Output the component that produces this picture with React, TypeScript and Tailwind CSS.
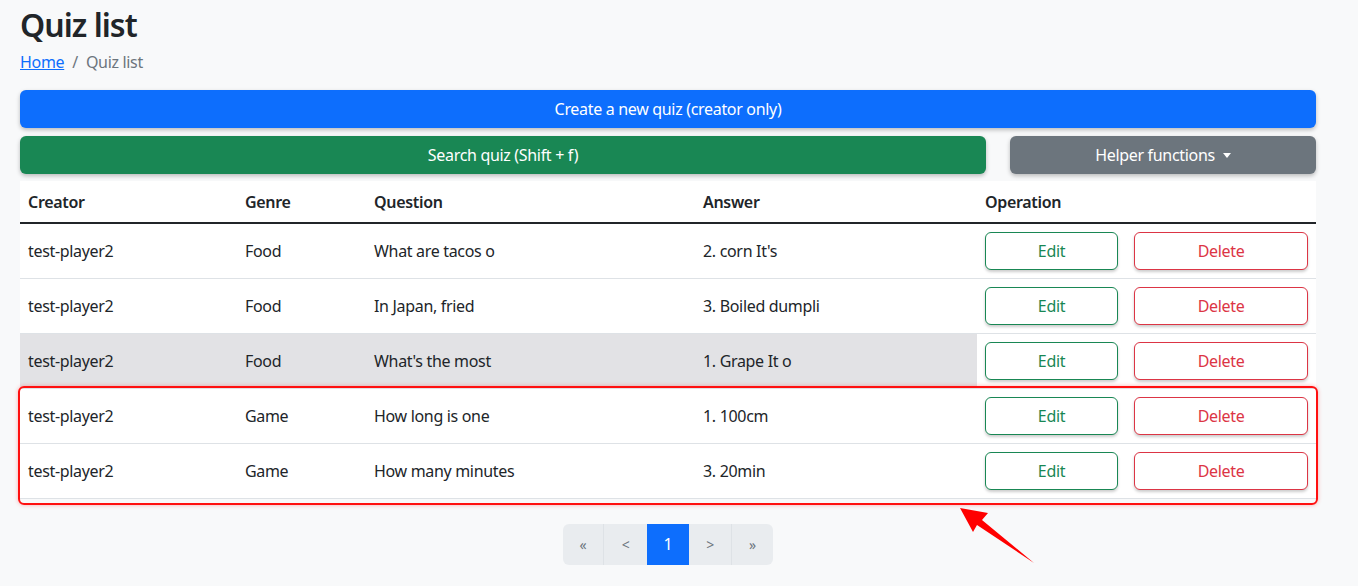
import React from "react";

const rows = [
  { c: "test-player2", g: "Food", q: "What are tacos o", a: "2. corn It's" },
  { c: "test-player2", g: "Food", q: "In Japan, fried", a: "3. Boiled dumpli" },
  { c: "test-player2", g: "Food", q: "What's the most", a: "1. Grape It o", hover: true },
  { c: "test-player2", g: "Game", q: "How long is one", a: "1. 100cm" },
  { c: "test-player2", g: "Game", q: "How many minutes", a: "3. 20min" },
];

export default function App() {
  return (
    <div
      className="min-h-[586px] bg-[#f8f9fa] text-[#212529] relative tracking-[-0.02em]"
      style={{ fontFamily: '"Noto Sans", "Open Sans", sans-serif' }}
    >
      <div className="ml-[20px] w-[1296px] pt-[6px]">
        <h2 className="text-[32px] leading-[38px] font-semibold m-0 tracking-[-0.03em]">Quiz list</h2>
        <div className="mt-[6px] flex items-center text-[16px] leading-[24px]">
          <a className="text-[#0d6efd] underline">Home</a>
          <span className="px-[8px] text-[#6c757d]">/</span>
          <span className="text-[#6c757d]">Quiz list</span>
        </div>

        <button className="mt-[16px] w-full h-[38px] rounded-[6px] bg-[#0d6efd] text-white text-[16px] shadow-[0_2px_4px_rgba(0,0,0,0.25)]">
          Create a new quiz (creator only)
        </button>

        <div className="mt-[8px] flex gap-[24px]">
          <button className="w-[966px] h-[38px] rounded-[6px] bg-[#198754] text-white text-[16px] shadow-[0_2px_4px_rgba(0,0,0,0.25)]">
            Search quiz (Shift + f)
          </button>
          <button className="flex-1 h-[38px] rounded-[6px] bg-[#6c757d] text-white text-[16px] flex items-center justify-center gap-[8px] shadow-[0_2px_4px_rgba(0,0,0,0.25)]">
            Helper functions
            <span className="w-0 h-0 border-l-[4px] border-r-[4px] border-t-[5px] border-l-transparent border-r-transparent border-t-white" />
          </button>
        </div>

        <div className="relative mt-[7px]">
          <table className="w-full border-collapse bg-white text-[16px] table-fixed">
            <colgroup>
              <col className="w-[217px]" />
              <col className="w-[129px]" />
              <col className="w-[329px]" />
              <col className="w-[282px]" />
              <col className="w-[339px]" />
            </colgroup>
            <thead>
              <tr className="border-b-2 border-[#212529]">
                <th className="text-left font-semibold px-[8px] h-[42px]">Creator</th>
                <th className="text-left font-semibold px-[8px]">Genre</th>
                <th className="text-left font-semibold px-[8px]">Question</th>
                <th className="text-left font-semibold px-[8px]">Answer</th>
                <th className="text-left font-semibold px-[8px]">Operation</th>
              </tr>
            </thead>
            <tbody>
              {rows.map((r, i) => (
                <tr key={i} className="border-b border-[#dee2e6]">
                  <td className={`px-[8px] h-[55px] ${r.hover ? "bg-[#e2e2e5]" : ""}`}>{r.c}</td>
                  <td className={`px-[8px] ${r.hover ? "bg-[#e2e2e5]" : ""}`}>{r.g}</td>
                  <td className={`px-[8px] ${r.hover ? "bg-[#e2e2e5]" : ""}`}>{r.q}</td>
                  <td className={`px-[8px] ${r.hover ? "bg-[#e2e2e5]" : ""}`}>{r.a}</td>
                  <td className="px-[8px] bg-white">
                    <div className="flex gap-[16px]">
                      <button className="w-[133px] h-[38px] rounded-[6px] border border-[#198754] text-[#198754] bg-white shadow-[0_2px_3px_rgba(0,0,0,0.2)]">
                        Edit
                      </button>
                      <button className="w-[174px] h-[38px] rounded-[6px] border border-[#dc3545] text-[#dc3545] bg-white shadow-[0_2px_3px_rgba(0,0,0,0.2)]">
                        Delete
                      </button>
                    </div>
                  </td>
                </tr>
              ))}
            </tbody>
          </table>
          <div className="absolute left-[-2px] top-[205px] w-[1300px] h-[119px] rounded-[6px] border-2 border-[#ff1010] shadow-[0_0_4px_rgba(255,0,0,0.3)] pointer-events-none" />
        </div>

        <div className="mt-[25px] flex justify-center">
          <div className="flex h-[41px] rounded-[6px] overflow-hidden bg-[#e9ecef] text-[#6c757d] text-[14px]">
            <div className="w-[41px] flex items-center justify-center border-r border-[#dee2e6]">«</div>
            <div className="w-[43px] flex items-center justify-center">&lt;</div>
            <div className="w-[42px] flex items-center justify-center bg-[#0d6efd] text-white text-[16px]">1</div>
            <div className="w-[43px] flex items-center justify-center border-r border-[#dee2e6]">&gt;</div>
            <div className="w-[41px] flex items-center justify-center">»</div>
          </div>
        </div>
      </div>

      <svg className="absolute left-0 top-0 pointer-events-none" width="1358" height="586">
        <polygon points="960,508 988,513 982,520 1034,563 977,525 973,532" fill="#ff0000" />
      </svg>
    </div>
  );
}
